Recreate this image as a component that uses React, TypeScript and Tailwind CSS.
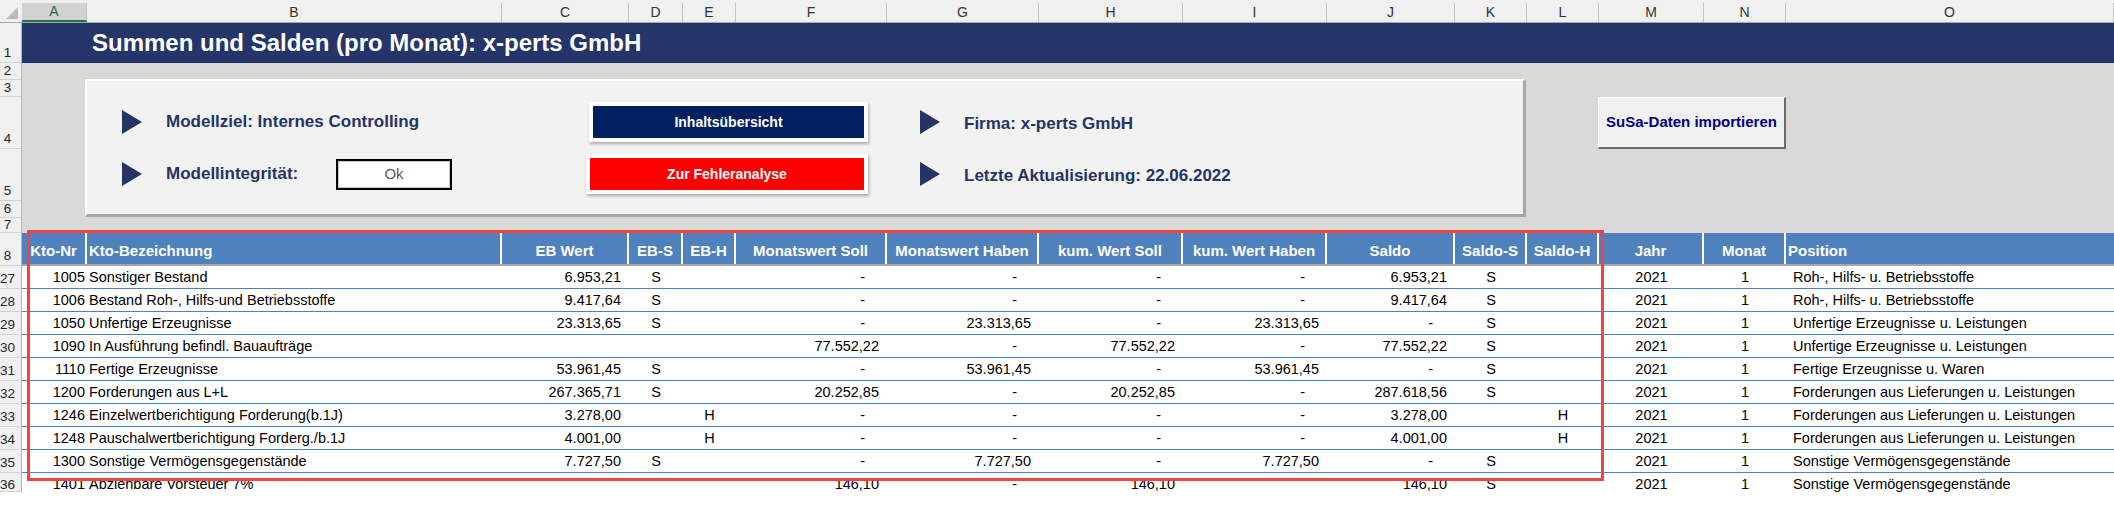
import React from "react";

type Col = { letter: string; w: string; head: string; headAlign: string; cell: string };

// widths follow the excel columns A..O
const cols: Col[] = [
  { letter: "A", w: "w-[65px]", head: "Kto-Nr", headAlign: "justify-center", cell: "justify-end pr-[2px]" },
  { letter: "B", w: "w-[415px]", head: "Kto-Bezeichnung", headAlign: "justify-start pl-[2px]", cell: "justify-start pl-[2px]" },
  { letter: "C", w: "w-[127px]", head: "EB Wert", headAlign: "justify-center", cell: "num" },
  { letter: "D", w: "w-[54px]", head: "EB-S", headAlign: "justify-center", cell: "justify-center" },
  { letter: "E", w: "w-[53px]", head: "EB-H", headAlign: "justify-center", cell: "justify-center" },
  { letter: "F", w: "w-[151px]", head: "Monatswert Soll", headAlign: "justify-center", cell: "num" },
  { letter: "G", w: "w-[152px]", head: "Monatswert Haben", headAlign: "justify-center", cell: "num" },
  { letter: "H", w: "w-[144px]", head: "kum. Wert Soll", headAlign: "justify-center", cell: "num" },
  { letter: "I", w: "w-[144px]", head: "kum. Wert Haben", headAlign: "justify-center", cell: "num" },
  { letter: "J", w: "w-[128px]", head: "Saldo", headAlign: "justify-center", cell: "num" },
  { letter: "K", w: "w-[72px]", head: "Saldo-S", headAlign: "justify-center", cell: "justify-center" },
  { letter: "L", w: "w-[72px]", head: "Saldo-H", headAlign: "justify-center", cell: "justify-center" },
  { letter: "M", w: "w-[105px]", head: "Jahr", headAlign: "justify-center", cell: "justify-center" },
  { letter: "N", w: "w-[82px]", head: "Monat", headAlign: "justify-center", cell: "justify-center" },
  { letter: "O", w: "flex-1", head: "Position", headAlign: "justify-start pl-[2px]", cell: "justify-start pl-[7px]" },
];

const rows: string[][] = [
  ["1005", "Sonstiger Bestand", "6.953,21", "S", "", "-", "-", "-", "-", "6.953,21", "S", "", "2021", "1", "Roh-, Hilfs- u. Betriebsstoffe"],
  ["1006", "Bestand Roh-, Hilfs-und Betriebsstoffe", "9.417,64", "S", "", "-", "-", "-", "-", "9.417,64", "S", "", "2021", "1", "Roh-, Hilfs- u. Betriebsstoffe"],
  ["1050", "Unfertige Erzeugnisse", "23.313,65", "S", "", "-", "23.313,65", "-", "23.313,65", "-", "S", "", "2021", "1", "Unfertige Erzeugnisse u. Leistungen"],
  ["1090", "In Ausführung befindl. Bauaufträge", "", "", "", "77.552,22", "-", "77.552,22", "-", "77.552,22", "S", "", "2021", "1", "Unfertige Erzeugnisse u. Leistungen"],
  ["1110", "Fertige Erzeugnisse", "53.961,45", "S", "", "-", "53.961,45", "-", "53.961,45", "-", "S", "", "2021", "1", "Fertige Erzeugnisse u. Waren"],
  ["1200", "Forderungen aus L+L", "267.365,71", "S", "", "20.252,85", "-", "20.252,85", "-", "287.618,56", "S", "", "2021", "1", "Forderungen aus Lieferungen u. Leistungen"],
  ["1246", "Einzelwertberichtigung Forderung(b.1J)", "3.278,00", "", "H", "-", "-", "-", "-", "3.278,00", "", "H", "2021", "1", "Forderungen aus Lieferungen u. Leistungen"],
  ["1248", "Pauschalwertberichtigung Forderg./b.1J", "4.001,00", "", "H", "-", "-", "-", "-", "4.001,00", "", "H", "2021", "1", "Forderungen aus Lieferungen u. Leistungen"],
  ["1300", "Sonstige Vermögensgegenstände", "7.727,50", "S", "", "-", "7.727,50", "-", "7.727,50", "-", "S", "", "2021", "1", "Sonstige Vermögensgegenstände"],
  ["1401", "Abziehbare Vorsteuer 7%", "", "", "", "146,10", "-", "146,10", "", "146,10", "S", "", "2021", "1", "Sonstige Vermögensgegenstände"],
];

const rowNums = [
  { n: "1", h: "h-[40px]", pb: "pb-[3px]" },
  { n: "2", h: "h-[17px]", pb: "pb-[2px]" },
  { n: "3", h: "h-[17px]", pb: "pb-[2px]" },
  { n: "4", h: "h-[52px]", pb: "pb-[3px]" },
  { n: "5", h: "h-[52px]", pb: "pb-[3px]" },
  { n: "6", h: "h-[17px]", pb: "pb-[2px]" },
  { n: "7", h: "h-[15px]", pb: "pb-[1px]" },
  { n: "8", h: "h-[33px]", pb: "pb-[3px]" },
  { n: "27", h: "h-[23px]", pb: "pb-[3px]" },
  { n: "28", h: "h-[23px]", pb: "pb-[3px]" },
  { n: "29", h: "h-[23px]", pb: "pb-[3px]" },
  { n: "30", h: "h-[23px]", pb: "pb-[3px]" },
  { n: "31", h: "h-[23px]", pb: "pb-[3px]" },
  { n: "32", h: "h-[23px]", pb: "pb-[3px]" },
  { n: "33", h: "h-[23px]", pb: "pb-[3px]" },
  { n: "34", h: "h-[23px]", pb: "pb-[3px]" },
  { n: "35", h: "h-[23px]", pb: "pb-[3px]" },
  { n: "36", h: "h-[19px]", pb: "pb-0" },
];

const Triangle = () => (
  <svg width="20" height="24" viewBox="0 0 20 24" className="shrink-0">
    <polygon points="0,0 20,12 0,24" fill="#253465" />
  </svg>
);

const ColumnBand = () => (
  <div className="flex h-[23px] items-end bg-[#f0f0f0] border-b border-[#a8a8a8]">
    <div className="w-[22px] h-[19px] flex items-end justify-end pr-[4px] pb-[3px]">
      <svg width="12" height="12" viewBox="0 0 12 12">
        <polygon points="12,0 12,12 0,12" fill="#b9b9b9" />
      </svg>
    </div>
    {cols.map((c) => (
      <div
        key={c.letter}
        className={
          c.letter === "A"
            ? `${c.w} h-[19px] flex items-center justify-center bg-[#d2d2d2] text-[#1d6b41] border-b-2 border-[#217346] border-r border-r-[#c4c4c4] text-[14px]`
            : `${c.w} h-[19px] flex items-center justify-center text-[#333] border-r border-[#c4c4c4] text-[14px]`
        }
      >
        {c.letter}
      </div>
    ))}
  </div>
);

const RowNumbers = () => (
  <div className="w-[22px] shrink-0 bg-[#f0f0f0] border-r border-[#b4b4b4]">
    {rowNums.map((r) => (
      <div
        key={r.n}
        className={`${r.h} ${r.pb} flex items-end justify-center pr-[6px] border-b border-[#d2d2d2] text-[13.5px] leading-[13px] text-[#262626]`}
      >
        <span>{r.n}</span>
      </div>
    ))}
  </div>
);

const Panel = () => (
  <div className="ml-[63px] mt-[16px] w-[1441px] h-[138px] shrink-0 bg-[#f2f2f2] border-t-2 border-l-2 border-white border-r-[3px] border-b-[3px] border-r-[#a6a6a6] border-b-[#a6a6a6] flex pt-[21px] pl-[35px] text-[#253465] text-[17px] font-bold">
    <div className="w-[467px] flex flex-col gap-[12px]">
      <div className="h-[40px] flex items-center">
        <Triangle />
        <span className="ml-[24px]">Modellziel: Internes Controlling</span>
      </div>
      <div className="h-[40px] flex items-center">
        <Triangle />
        <span className="ml-[24px] w-[170px]">Modellintegrität:</span>
        <div className="w-[116px] h-[31px] bg-white border-2 border-black shadow-[inset_0_0_0_1px_#c8c8c8] flex items-center justify-center text-[15px] font-normal text-[#5a5a5a]">
          Ok
        </div>
      </div>
    </div>
    <div className="w-[279px] flex flex-col gap-[12px]">
      <div className="h-[40px] border-[4px] border-white bg-[#002060] shadow-[1px_2px_3px_rgba(0,0,0,0.3)] flex items-center justify-center text-white text-[14px]">
        Inhaltsübersicht
      </div>
      <div className="h-[40px] -ml-[3px] border-[4px] border-white bg-[#ff0000] shadow-[1px_2px_3px_rgba(0,0,0,0.3)] flex items-center justify-center text-white text-[14px]">
        Zur Fehleranalyse
      </div>
    </div>
    <div className="ml-[52px] flex flex-col gap-[12px]">
      <div className="h-[40px] flex items-center">
        <Triangle />
        <span className="ml-[24px] pt-[3px]">Firma: x-perts GmbH</span>
      </div>
      <div className="h-[40px] flex items-center">
        <Triangle />
        <span className="ml-[24px] pt-[4px]">Letzte Aktualisierung: 22.06.2022</span>
      </div>
    </div>
  </div>
);

const cellClass = (c: Col, v: string) => {
  if (c.cell === "num") {
    return v === "-" ? "justify-end pr-[22px]" : "justify-end pr-[8px]";
  }
  return c.cell;
};

const DataRow = ({ r }: { r: string[] }) => (
  <div className="h-[23px] shrink-0 flex bg-white border-b border-[#4f81bd]">
    {cols.map((c, i) => (
      <div key={c.letter} className={`${c.w} flex items-center pt-[2px] whitespace-nowrap ${cellClass(c, r[i])}`}>
        {r[i]}
      </div>
    ))}
  </div>
);

export default function App() {
  return (
    <div className="relative w-[2114px] h-[511px] overflow-hidden bg-white font-['Liberation_Sans',Arial,sans-serif] text-black">
      <ColumnBand />
      <div className="flex">
        <RowNumbers />
        <div className="flex-1 flex flex-col">
          <div className="h-[40px] bg-[#253469] flex items-center pl-[70px] text-white text-[24px] font-bold">
            Summen und Salden (pro Monat): x-perts GmbH
          </div>
          <div className="h-[170px] bg-[#d9d9d9] flex items-start">
            <Panel />
            <div className="ml-[72px] mt-[34px] w-[188px] h-[52px] shrink-0 bg-[#f0f0f0] border-t border-l border-white border-r-2 border-b-2 border-r-[#6b6b6b] border-b-[#6b6b6b] flex items-center justify-center text-[#000080] text-[15px] font-bold">
              SuSa-Daten importieren
            </div>
          </div>
          <div className="h-[33px] flex bg-[#4f81bd] border-b-2 border-[#a6a6a6] text-white font-bold text-[15px]">
            {cols.map((c, i) => (
              <div
                key={c.letter}
                className={`${c.w} flex items-center pt-[5px] whitespace-nowrap ${c.headAlign} ${i < cols.length - 1 ? "border-r-2 border-white" : ""}`}
              >
                {c.head}
              </div>
            ))}
          </div>
          <div className="text-[14.5px]">
            {rows.slice(0, 9).map((r) => (
              <DataRow key={r[0]} r={r} />
            ))}
            <div className="h-[19px] overflow-hidden">
              <DataRow r={rows[9]} />
            </div>
          </div>
        </div>
      </div>
      <div className="h-[19px] bg-white" />
      <div className="absolute left-[27px] top-[230px] w-[1577px] h-[251px] border-[3px] border-[#f04343] pointer-events-none" />
    </div>
  );
}
